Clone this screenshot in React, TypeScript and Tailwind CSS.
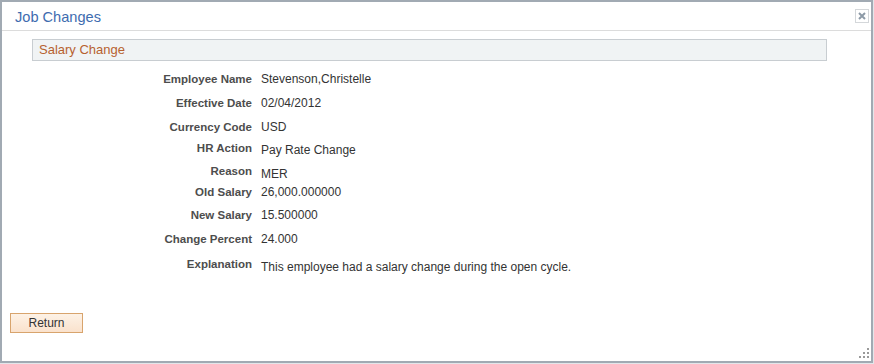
import React from "react";

type Row = { label: string; value: string; mt: string; vpt: string };

const rows: Row[] = [
  { label: "Employee Name", value: "Stevenson,Christelle", mt: "mt-[11px]", vpt: "pt-0" },
  { label: "Effective Date", value: "02/04/2012", mt: "mt-[10px]", vpt: "pt-0" },
  { label: "Currency Code", value: "USD", mt: "mt-[10px]", vpt: "pt-0" },
  { label: "HR Action", value: "Pay Rate Change", mt: "mt-[7px]", vpt: "pt-[2px]" },
  { label: "Reason", value: "MER", mt: "mt-[7px]", vpt: "pt-[3px]" },
  { label: "Old Salary", value: "26,000.000000", mt: "mt-[4px]", vpt: "pt-0" },
  { label: "New Salary", value: "15.500000", mt: "mt-[9px]", vpt: "pt-0" },
  { label: "Change Percent", value: "24.000", mt: "mt-[10px]", vpt: "pt-0" },
  { label: "Explanation", value: "This employee had a salary change during the open cycle.", mt: "mt-[11px]", vpt: "pt-[3px]" },
];

export default function App() {
  return (
    <div className="w-[874px] h-[364px] bg-[#e3e6ea] font-['Liberation_Sans',Arial,sans-serif]">
      <div className="relative w-[873px] h-[363px] border-2 border-[#a1aab3] bg-white flex flex-col">
        <div className="h-[29px] border-b border-[#dcdcdc] flex items-start justify-between">
          <div className="ml-[13px] mt-[6px] text-[14.6px] leading-[18px] text-[#3e6caf]">Job Changes</div>
          <div className="mt-[7px] mr-[2px] w-[14px] h-[14px] border border-[#d4d7da] bg-white flex items-center justify-center">
            <svg width="8" height="8" viewBox="0 0 8 8">
              <path d="M1 1 L7 7 M7 1 L1 7" stroke="#8d9aa7" strokeWidth="2" />
            </svg>
          </div>
        </div>

        <div className="mt-[8px] ml-[30px] w-[795px] h-[22px] border border-[#c8cdd1] bg-[#f0f3f4] pl-[6px] text-[13px] leading-[20px] text-[#b7612f]">
          Salary Change
        </div>

        <div className="flex flex-col text-[12px] leading-[14px]">
          {rows.map((r) => (
            <div key={r.label} className={`flex ${r.mt}`}>
              <div className="w-[250px] text-right font-bold text-[11.5px] text-[#4d4d4d]">{r.label}</div>
              <div className={`ml-[9px] text-[#333333] ${r.vpt}`}>{r.value}</div>
            </div>
          ))}
        </div>

        <div className="mt-[36px] ml-[8px]">
          <button className="w-[73px] h-[20px] border border-[#d8a46d] bg-gradient-to-b from-[#fdf2e6] to-[#fae2cd] text-[12px] leading-[18px] text-[#333333] font-['Liberation_Sans',Arial,sans-serif]">
            Return
          </button>
        </div>

        <svg className="absolute right-[1px] bottom-[2px]" width="11" height="11" viewBox="0 0 11 11">
          <rect x="8" y="0" width="2" height="2" fill="#9a9a9a" />
          <rect x="4" y="4" width="2" height="2" fill="#9a9a9a" />
          <rect x="8" y="4" width="2" height="2" fill="#9a9a9a" />
          <rect x="0" y="8" width="2" height="2" fill="#9a9a9a" />
          <rect x="4" y="8" width="2" height="2" fill="#9a9a9a" />
          <rect x="8" y="8" width="2" height="2" fill="#9a9a9a" />
        </svg>
      </div>
    </div>
  );
}
